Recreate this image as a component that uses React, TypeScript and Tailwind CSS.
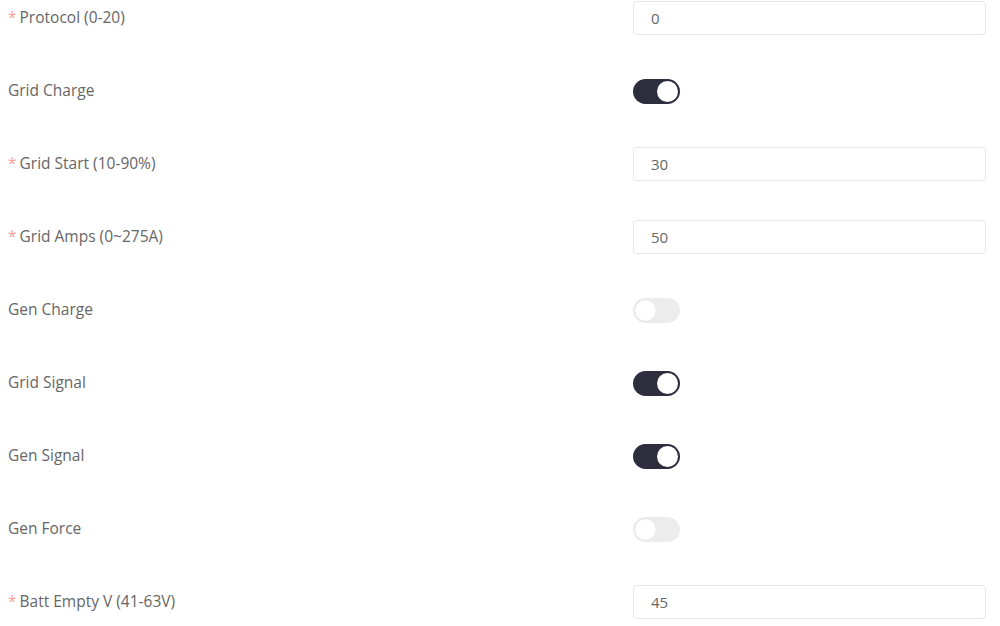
type Field =
  | { label: string; required: true; kind: "input"; value: string }
  | { label: string; required?: false; kind: "switch"; on: boolean };

const fields: Field[] = [
  { label: "Protocol (0-20)", required: true, kind: "input", value: "0" },
  { label: "Grid Charge", kind: "switch", on: true },
  { label: "Grid Start (10-90%)", required: true, kind: "input", value: "30" },
  { label: "Grid Amps (0~275A)", required: true, kind: "input", value: "50" },
  { label: "Gen Charge", kind: "switch", on: false },
  { label: "Grid Signal", kind: "switch", on: true },
  { label: "Gen Signal", kind: "switch", on: true },
  { label: "Gen Force", kind: "switch", on: false },
  { label: "Batt Empty V (41-63V)", required: true, kind: "input", value: "45" },
];

function Toggle({ on }: { on: boolean }) {
  return (
    <div
      className={`flex h-[25px] w-[47px] items-center rounded-full p-[2px] ${
        on ? "justify-end bg-[#2e2d3d]" : "justify-start bg-[#ececec]"
      }`}
    >
      <span
        className={`block h-[21px] w-[21px] rounded-full bg-white ${
          on ? "" : "shadow-[0_0_1px_rgba(0,0,0,0.15)]"
        }`}
      />
    </div>
  );
}

export default function App() {
  return (
    <div
      className="flex min-h-[626px] flex-col gap-[39px] bg-white pl-2 pr-[14px] pt-[1px] text-[#666666]"
      style={{ fontFamily: '"Open Sans", "Noto Sans", sans-serif' }}
    >
      {fields.map((f) => (
        <div key={f.label} className="flex h-[34px] items-center">
          <div className="flex-1 text-[15.5px]">
            {f.required && <span className="mr-[3px] text-[#f3a3a3]">*</span>}
            {f.label}
          </div>
          <div className="flex w-[353px] items-center">
            {f.kind === "input" ? (
              <div className="flex h-[34px] w-full items-center rounded-[4px] border border-[#e4e7ed] bg-white px-[17px] text-[15px] text-[#666666]">
                {f.value}
              </div>
            ) : (
              <Toggle on={f.on} />
            )}
          </div>
        </div>
      ))}
    </div>
  );
}
